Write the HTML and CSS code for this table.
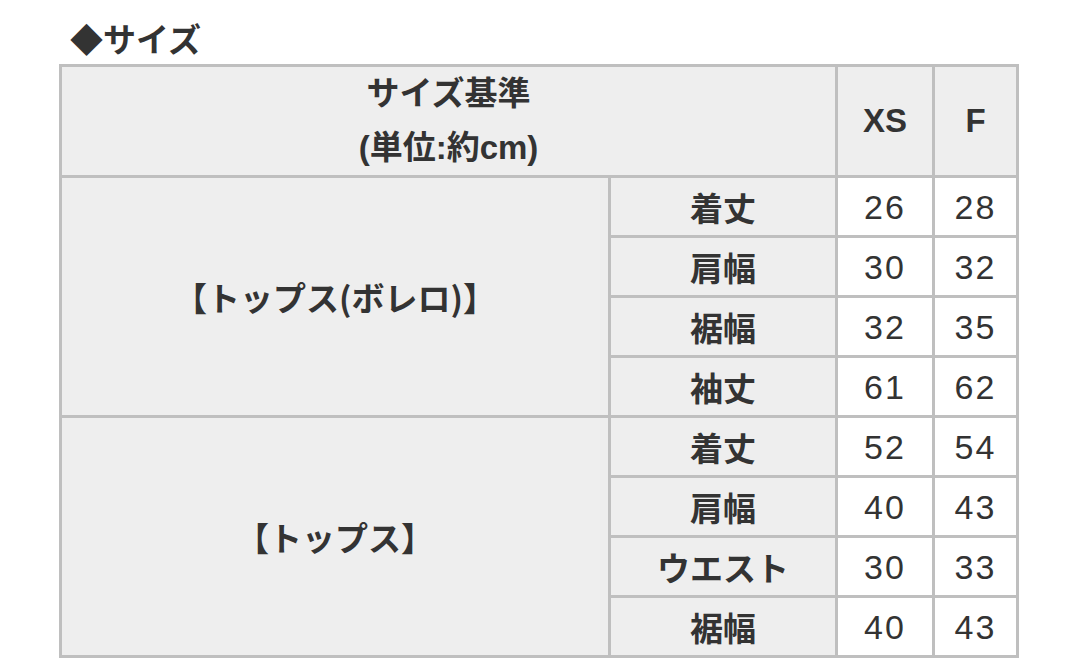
FILE: index.html
```html
<!DOCTYPE html>
<html lang="ja">
<head>
<meta charset="utf-8">
<title>サイズ</title>
<link rel="stylesheet" href="styles.css">
</head>
<body>
<div class="page">
  <h2 class="title">◆サイズ</h2>
  <table class="size-table">
    <colgroup>
      <col class="c1"><col class="c2"><col class="c3"><col class="c4">
    </colgroup>
    <thead>
      <tr class="head-row">
        <th colspan="2" class="head-main">サイズ基準<br>(単位:約cm)</th>
        <th class="head-size">XS</th>
        <th class="head-size">F</th>
      </tr>
    </thead>
    <tbody>
      <tr><th rowspan="4" class="group">【トップス(ボレロ)】</th><th class="item">着丈</th><td>26</td><td>28</td></tr>
      <tr><th class="item">肩幅</th><td>30</td><td>32</td></tr>
      <tr><th class="item">裾幅</th><td>32</td><td>35</td></tr>
      <tr><th class="item">袖丈</th><td>61</td><td>62</td></tr>
      <tr><th rowspan="4" class="group">【トップス】</th><th class="item">着丈</th><td>52</td><td>54</td></tr>
      <tr><th class="item">肩幅</th><td>40</td><td>43</td></tr>
      <tr><th class="item">ウエスト</th><td>30</td><td>33</td></tr>
      <tr><th class="item">裾幅</th><td>40</td><td>43</td></tr>
    </tbody>
  </table>
</div>
</body>
</html>
```

FILE: styles.css
```css
html, body {
  margin: 0;
  padding: 0;
  background: #ffffff;
}

.page {
  padding: 18px 0 0 59px;
  font-family: "Liberation Sans", "Noto Sans CJK JP", sans-serif;
  color: #333333;
}

.title {
  margin: 0 0 6px 11px;
  font-family: "Noto Sans CJK JP", sans-serif;
  font-size: 33px;
  font-weight: 700;
  line-height: 40px;
  color: #333333;
}

.size-table {
  width: 960px;
  table-layout: fixed;
  border-collapse: separate;
  border-spacing: 0;
  border-top: 3px solid #bfbfbf;
  border-left: 3px solid #bfbfbf;
}

.c1 { width: 549px; }
.c2 { width: 227px; }
.c3 { width: 97px; }
.c4 { width: 84px; }

.size-table th,
.size-table td {
  padding: 0;
  border-right: 3px solid #bfbfbf;
  border-bottom: 3px solid #bfbfbf;
  text-align: center;
  vertical-align: middle;
  color: #333333;
}

.size-table th {
  background: #eeeeee;
  font-weight: 700;
  font-size: 33px;
}

.size-table td {
  background: #ffffff;
  font-weight: 400;
  font-size: 34px;
  letter-spacing: 2px;
  line-height: 40px;
}

.head-row { height: 111px; }
.size-table tbody tr { height: 60px; }

.head-main {
  line-height: 54px;
}

.head-size {
  font-size: 36px;
  line-height: 40px;
}

.group,
.item {
  font-family: "Noto Sans CJK JP", sans-serif;
  line-height: 40px;
}
```
